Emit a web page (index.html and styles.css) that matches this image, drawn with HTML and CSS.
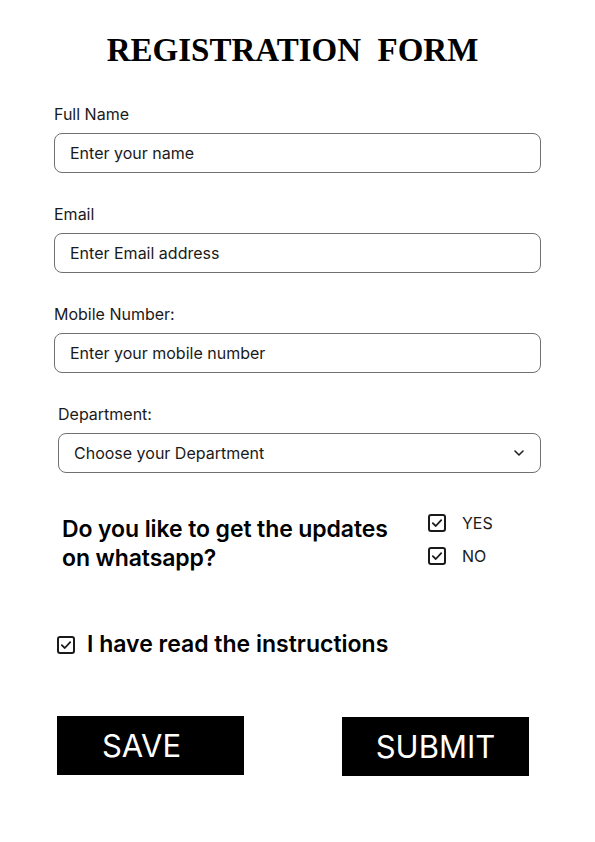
FILE: index.html
```html
<!DOCTYPE html>
<html>
<head>
<meta charset="utf-8">
<link rel="stylesheet" href="styles.css">
</head>
<body>
<div class="page">
  <h1 class="title">REGISTRATION&nbsp; FORM</h1>

  <div class="field">
    <div class="label">Full Name</div>
    <div class="input">Enter your name</div>
  </div>
  <div class="field">
    <div class="label">Email</div>
    <div class="input">Enter Email address</div>
  </div>
  <div class="field">
    <div class="label">Mobile Number:</div>
    <div class="input">Enter your mobile number</div>
  </div>
  <div class="field field-dept">
    <div class="label">Department:</div>
    <div class="input select">
      <span>Choose your Department</span>
      <svg class="chevron" width="10" height="6" viewBox="0 0 10 6"><path d="M1 1 L5 5 L9 1" fill="none" stroke="#222" stroke-width="1.6" stroke-linecap="round" stroke-linejoin="round"/></svg>
    </div>
  </div>

  <div class="question">
    <div class="q-text">Do you like to get the updates on whatsapp?</div>
    <div class="options">
      <div class="option">
        <svg class="cb" width="18" height="18" viewBox="0 0 18 18"><rect x="1" y="1" width="16" height="16" rx="2" fill="none" stroke="#1a1a1a" stroke-width="2"/><path d="M4.8 9.2 L7.8 12 L13.2 6.2" fill="none" stroke="#1a1a1a" stroke-width="1.8" stroke-linecap="round" stroke-linejoin="round"/></svg>
        <span>YES</span>
      </div>
      <div class="option">
        <svg class="cb" width="18" height="18" viewBox="0 0 18 18"><rect x="1" y="1" width="16" height="16" rx="2" fill="none" stroke="#1a1a1a" stroke-width="2"/><path d="M4.8 9.2 L7.8 12 L13.2 6.2" fill="none" stroke="#1a1a1a" stroke-width="1.8" stroke-linecap="round" stroke-linejoin="round"/></svg>
        <span>NO</span>
      </div>
    </div>
  </div>

  <div class="agree">
    <svg class="cb" width="18" height="18" viewBox="0 0 18 18"><rect x="1" y="1" width="16" height="16" rx="2" fill="none" stroke="#1a1a1a" stroke-width="2"/><path d="M4.8 9.2 L7.8 12 L13.2 6.2" fill="none" stroke="#1a1a1a" stroke-width="1.8" stroke-linecap="round" stroke-linejoin="round"/></svg>
    <span>I have read the instructions</span>
  </div>

  <div class="buttons">
    <div class="btn">SAVE</div>
    <div class="btn btn-submit">SUBMIT</div>
  </div>
</div>
</body>
</html>
```

FILE: styles.css
```css
html, body {
  margin: 0;
  padding: 0;
  background: #ffffff;
}

body {
  font-family: Inter, "Noto Sans", sans-serif;
  color: #1a1a1a;
}

.page {
  width: 595px;
  height: 842px;
  box-sizing: border-box;
  padding: 30px 54px 0 54px;
}

.title {
  margin: 0 0 35px 0;
  text-align: center;
  font-family: "Liberation Serif", "Times New Roman", serif;
  font-weight: bold;
  font-size: 33px;
  line-height: 40px;
  color: #000;
  padding-right: 10px;
}

.field {
  margin-bottom: 32px;
}

.field-dept {
  margin-left: 4px;
  margin-bottom: 42px;
}

.label {
  font-size: 16px;
  line-height: 18px;
  color: #1a1a1a;
  margin-bottom: 10px;
}

.input {
  height: 40px;
  box-sizing: border-box;
  border: 1px solid #707070;
  border-radius: 8px;
  padding: 0 15px;
  display: flex;
  align-items: center;
  font-size: 16px;
  color: #1a1a1a;
}

.select {
  justify-content: space-between;
  padding-right: 16px;
}

.chevron {
  display: block;
}

.question {
  display: flex;
  align-items: flex-start;
  padding-left: 8px;
}

.q-text {
  width: 340px;
  margin-right: 26px;
  font-size: 23px;
  font-weight: 600;
  line-height: 29px;
  color: #000;
  letter-spacing: -0.1px;
}

.options {
  margin-top: -1px;
  display: flex;
  flex-direction: column;
  gap: 15px;
}

.option {
  display: flex;
  align-items: center;
  height: 18px;
  font-size: 16px;
  color: #1a1a1a;
}

.option span {
  margin-left: 16px;
}

.cb {
  display: block;
  flex: none;
}

.agree {
  margin-top: 57px;
  margin-left: 3px;
  display: flex;
  align-items: center;
  font-size: 23px;
  font-weight: 600;
  color: #000;
  line-height: 29px;
}

.agree span {
  margin-left: 12px;
}

.buttons {
  margin-top: 57px;
  display: flex;
  justify-content: space-between;
  padding: 0 12px 0 3px;
}

.btn {
  width: 187px;
  height: 59px;
  background: #000;
  color: #fff;
  font-size: 31px;
  display: flex;
  align-items: center;
  justify-content: center;
  padding-right: 18px;
  box-sizing: border-box;
}

.btn-submit {
  margin-top: 1px;
  padding-right: 0;
}
```
